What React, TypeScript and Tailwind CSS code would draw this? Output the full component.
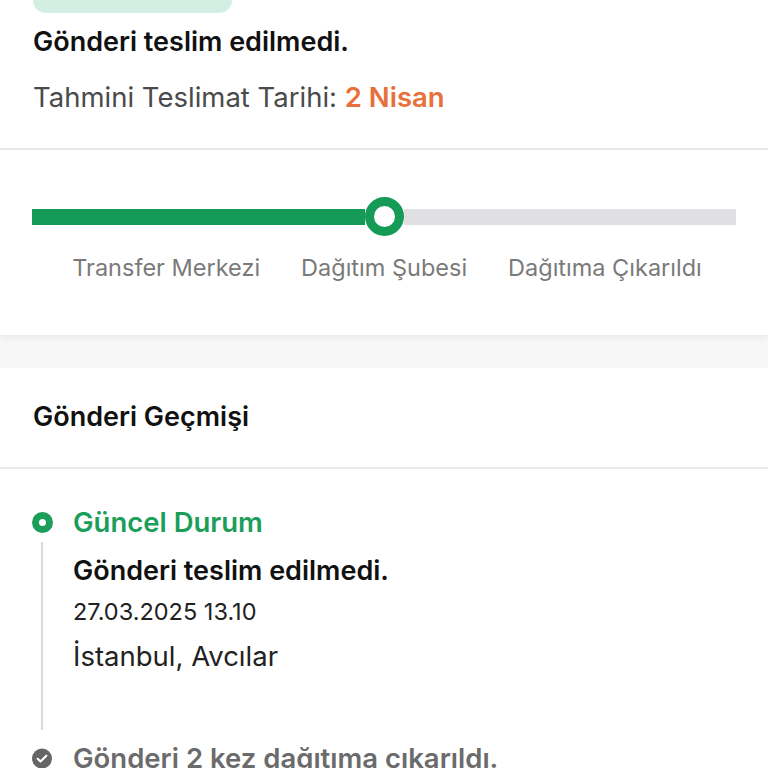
import React from 'react';

const steps = ['Transfer Merkezi', 'Dağıtım Şubesi', 'Dağıtıma Çıkarıldı'];

const App = () => {
  return (
    <div className="h-[768px] w-[768px] overflow-hidden bg-white font-['Inter',sans-serif]">
      {/* Status header */}
      <div className="border-b-2 border-[#e9e9e9] px-[33px] pb-[35px]">
        <div className="h-[13px] w-[199px] rounded-b-[16px] bg-[#d3eee2]" />
        <h1 className="mt-[13px] text-[27px] font-semibold leading-[32px] text-[#111111]">
          Gönderi teslim edilmedi.
        </h1>
        <p className="mt-[23px] text-[27.5px] leading-[32px] text-[#4a4a4a]">
          Tahmini Teslimat Tarihi: <span className="font-semibold text-[#e8703a]">2 Nisan</span>
        </p>
      </div>

      {/* Progress */}
      <div className="relative z-10 bg-white px-[32px] pt-[47px] pb-[53px] shadow-[0_3px_6px_rgba(0,0,0,0.06)]">
        <div className="flex h-[39px] items-center">
          <div className="h-[16px] w-[333px] bg-[#169b57]" />
          <div className="h-[39px] w-[39px] rounded-full border-[9px] border-[#169b57] bg-white" />
          <div className="h-[16px] flex-1 bg-[#e0e0e2]" />
        </div>
        <div className="mt-[18px] flex justify-center gap-[41px] pl-[6px] text-[23.5px] leading-[28px] text-[#7a7a7a]">
          {steps.map((s) => (
            <span key={s}>{s}</span>
          ))}
        </div>
      </div>

      <div className="h-[33px] bg-[#f7f7f7]" />

      {/* History */}
      <div className="bg-white">
        <div className="border-b-2 border-[#e9e9e9] px-[33px] pt-[33px] pb-[34px]">
          <h2 className="text-[27px] font-semibold leading-[32px] text-[#111111]">Gönderi Geçmişi</h2>
        </div>

        <div className="px-[32px] pt-[37px]">
          <div className="flex gap-[21px]">
            <div className="flex w-[20px] flex-col items-center">
              <div className="flex h-[32px] items-center">
                <div className="h-[21px] w-[21px] rounded-full border-[7px] border-[#1c9e5b] bg-white" />
              </div>
              <div className="mt-[4px] mb-[12px] w-[2px] flex-1 bg-[#d9d9d9]" />
            </div>
            <div className="pb-[70px]">
              <div className="text-[27.5px] font-semibold leading-[32px] text-[#1c9e5b]">Güncel Durum</div>
              <div className="mt-[17px] text-[27px] font-semibold leading-[32px] text-[#111111]">
                Gönderi teslim edilmedi.
              </div>
              <div className="mt-[11px] text-[23.5px] leading-[28px] text-[#222222]">27.03.2025 13.10</div>
              <div className="mt-[14px] text-[27.5px] leading-[32px] text-[#222222]">İstanbul, Avcılar</div>
            </div>
          </div>

          <div className="flex gap-[21px]">
            <div className="flex h-[32px] w-[20px] items-center justify-center">
              <svg width="21" height="21" viewBox="0 0 24 24">
                <circle cx="12" cy="12" r="12" fill="#666666" />
                <path d="M6.8 12.4l3.4 3.3 7-7" fill="none" stroke="#ffffff" strokeWidth="2.6" strokeLinecap="round" strokeLinejoin="round" />
              </svg>
            </div>
            <div className="whitespace-nowrap text-[27.5px] font-semibold leading-[32px] text-[#6b6b6b]">
              Gönderi 2 kez dağıtıma çıkarıldı.
            </div>
          </div>
        </div>
      </div>
    </div>
  );
};

export default App;
